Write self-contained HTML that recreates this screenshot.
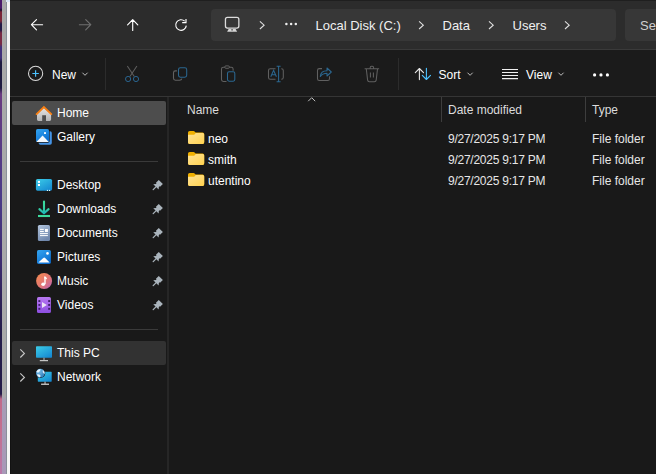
<!DOCTYPE html>
<html><head><meta charset="utf-8">
<style>
*{margin:0;padding:0;box-sizing:border-box}
html,body{width:656px;height:474px;overflow:hidden;background:#191919;font-family:"Liberation Sans",sans-serif;font-size:12px;color:#fff}
.abs{position:absolute}
#wall{left:0;top:0;width:2px;height:474px;background:linear-gradient(to bottom,#4a1a6a 0px,#4a1a6a 8px,#1a1030 10px,#7a2436 12px,#7a2838 21px,#221a46 24px,#221a46 30px,#782a44 33px,#782a44 44px,#40307a 47px,#40307a 58px,#1e1a40 62px,#1e1a40 88px,#6a3a80 94px,#5a3a84 140px,#4a3a88 200px,#3e2c70 260px,#2e2258 300px,#241c4a 330px,#231a48 394px,#c06a8a 399px,#c47090 430px,#b878a8 474px)}
#wallb{left:2px;top:0;width:4px;height:474px;background:linear-gradient(to bottom,#a9a9a9 0,#a9a9a9 396px,#a89cb6 400px,#a898b8 474px)}
#walle{left:6px;top:0;width:1px;height:474px;background:#8a909a}
#wallw{left:7px;top:0;width:3px;height:474px;background:#f6f6f6}
#top{left:10px;top:0;width:646px;height:49px;background:#2c2c2c}
#top0{left:10px;top:0;width:646px;height:1px;background:#1f1f1f}
#topline{left:10px;top:49px;width:646px;height:1px;background:#3a3a3a}
#tb{left:10px;top:50px;width:646px;height:46px;background:#1b1b1b}
#tbline{left:10px;top:96px;width:646px;height:1px;background:#353535}
#addr{left:211px;top:9px;width:405px;height:32px;background:#373737;border-radius:4px}
#search{left:625px;top:9px;width:60px;height:32px;background:#373737;border-radius:4px}
.t{position:absolute;white-space:nowrap;line-height:1}
.a13{font-size:13px;color:#f0f0f0}
#navdiv{left:167px;top:97px;width:2px;height:377px;background:#262626}
#navedge{left:10px;top:97px;width:1px;height:377px;background:#121212}
.sel{position:absolute;left:12px;top:101px;width:154px;height:24px;background:#4d4d4d;border-radius:2px}
.sel2{position:absolute;left:12px;top:341px;width:154px;height:24px;background:#323232;border-radius:2px}
.hr{position:absolute;height:1px;background:#3a3a3a}
.colsep{position:absolute;top:97px;width:1px;height:25px;background:#3d3d3d}
svg{position:absolute;overflow:visible}
.pin{width:12px;height:12px}
.dt{color:#e6e6e6;letter-spacing:-0.25px}
.ty{color:#e6e6e6}
</style></head><body>
<div id="wall" class="abs"></div>
<div id="wallb" class="abs"></div>
<div id="walle" class="abs"></div>
<div id="wallw" class="abs"></div><div class="abs" style="left:6px;top:0;width:4px;height:2px;background:#dce8f6"></div>
<div id="top" class="abs"></div>
<div id="top0" class="abs"></div>
<div id="topline" class="abs"></div>
<div id="tb" class="abs"></div>
<div id="tbline" class="abs"></div>
<div id="addr" class="abs"></div>
<div id="search" class="abs"></div>

<!-- nav buttons -->
<svg style="left:0;top:0" width="1" height="1">
<path d="M31.6 24.7H42.6M36.5 19.6L31.4 24.7L36.5 29.8" fill="none" stroke="#fff" stroke-width="1.15" stroke-linecap="round" stroke-linejoin="round"/>
<path d="M79.4 24.7H90.6M85.7 19.6L90.8 24.7L85.7 29.8" fill="none" stroke="#6f6f6f" stroke-width="1.15" stroke-linecap="round" stroke-linejoin="round"/>
<path d="M132.7 30.5V19.8M127.6 24.9L132.7 19.6L137.8 24.9" fill="none" stroke="#fff" stroke-width="1.15" stroke-linecap="round" stroke-linejoin="round"/>
<path d="M186.3 25.6A5.3 5.3 0 1 1 184.7 21.2M186 18.9V22.6H182.2" fill="none" stroke="#fff" stroke-width="1.15"/>
</svg>

<!-- address -->
<svg style="left:0;top:0" width="1" height="1">
<rect x="225.45" y="17.45" width="13.4" height="10.6" rx="2" fill="none" stroke="#dcdcdc" stroke-width="1.3"/>
<path d="M228.6 29H235.6L237.1 31.8H227.1Z" fill="#d6d6d6"/>
<rect x="231.2" y="29.3" width="1.8" height="1.1" fill="#4a4a4a"/>
<path d="M259.9 21.3L264.1 25.2L259.9 29" fill="none" stroke="#e0e0e0" stroke-width="1.1"/>
<circle cx="286.4" cy="24" r="1.25" fill="#eee"/><circle cx="291.1" cy="24" r="1.25" fill="#eee"/><circle cx="295.8" cy="24" r="1.25" fill="#eee"/>
<path d="M419.1 21.3L423.3 25.2L419.1 29" fill="none" stroke="#e0e0e0" stroke-width="1.1"/>
<path d="M489 21.3L493.2 25.2L489 29" fill="none" stroke="#e0e0e0" stroke-width="1.1"/>
<path d="M565 21.3L569.2 25.2L565 29" fill="none" stroke="#e0e0e0" stroke-width="1.1"/>
</svg>
<div class="t a13" style="left:315.5px;top:19px">Local Disk (C:)</div>
<div class="t a13" style="left:442.5px;top:19px">Data</div>
<div class="t a13" style="left:512.5px;top:19px">Users</div>
<div class="t a13" style="left:640px;top:19px;color:#cfcfcf">Search</div>

<!-- toolbar -->
<svg style="left:0;top:0" width="1" height="1">
<circle cx="35.6" cy="73.4" r="7.1" fill="none" stroke="#d8d8d8" stroke-width="1.05"/>
<path d="M35.6 70.2V76.7M32.35 73.45H38.85" stroke="#4cc2ff" stroke-width="1.15"/>
<path d="M82.4 72.7L85 75.3L87.6 72.7" fill="none" stroke="#bdbdbd" stroke-width="1"/>
<!-- cut -->
<path d="M127.3 66L134.3 76.5M136.9 66L129.9 76.5" stroke="#5e5e5e" stroke-width="1.05"/>
<circle cx="128.1" cy="79" r="2.6" fill="#1b1b1b" stroke="#2a6590" stroke-width="1"/>
<circle cx="136" cy="79" r="2.6" fill="#1b1b1b" stroke="#2a6590" stroke-width="1"/>
<!-- copy -->
<path d="M176.9 70.9H175.4Q173.5 70.9 173.5 72.8V78.3Q173.5 80.2 175.4 80.2H179.6Q181.4 80.2 181.9 78.7" fill="none" stroke="#626262" stroke-width="1.1"/>
<rect x="178.5" y="67.8" width="8.2" height="9.4" rx="1.9" fill="none" stroke="#2b6790" stroke-width="1.05"/>
<!-- paste -->
<path d="M226.5 81.5H223.4Q221.5 81.5 221.5 79.6V69Q221.5 67.2 223.4 67.2H231.3Q233.1 67.2 233.1 69V70.7" fill="none" stroke="#606060" stroke-width="1.05"/>
<rect x="224.8" y="65.9" width="4.6" height="2.4" rx="1.1" fill="#1b1b1b" stroke="#606060" stroke-width="1"/>
<rect x="227.5" y="71.7" width="7.3" height="9.5" rx="1.6" fill="none" stroke="#2b6790" stroke-width="1.05"/>
<!-- rename -->
<path d="M275.5 68.8H270.3Q268.5 68.8 268.5 70.6V77.5Q268.5 79.3 270.3 79.3H275.5M281.3 68.8Q283.3 68.8 283.3 70.6V77.5Q283.3 79.3 281.3 79.3" fill="none" stroke="#606060" stroke-width="1.05"/>
<path d="M270.8 76.7L273.6 70.4L276.4 76.7M271.7 74.7H275.5" fill="none" stroke="#2b6790" stroke-width="1.05"/>
<path d="M278.6 66.3V81.7M276.6 66.3H280.6M276.6 81.7H280.6" fill="none" stroke="#2b6790" stroke-width="1.05"/>
<!-- share -->
<path d="M322 68.6H319.3Q317.5 68.6 317.5 70.4V78.7Q317.5 80.5 319.3 80.5H327.7Q329.5 80.5 329.5 78.7V76.3" fill="none" stroke="#606060" stroke-width="1.05"/>
<path d="M320.3 76.5C320.6 72.6 323.2 70.8 327 70.8V68L331.3 72L327 76V73.2C324 73.2 321.8 74.2 320.3 76.5Z" fill="none" stroke="#2b6790" stroke-width="1.05" stroke-linejoin="round"/>
<!-- trash -->
<path d="M364.6 68.8H379.1M370.2 68.6V67.6Q370.2 66.3 371.5 66.3H372.3Q373.6 66.3 373.6 67.6V68.6M366.3 69L367.6 80.1Q367.8 81.7 369.4 81.7H374.4Q376 81.7 376.2 80.1L377.5 69M370.4 72.6V77.5M373.4 72.6V77.5" fill="none" stroke="#606060" stroke-width="1.05"/>
<!-- separators -->
<rect x="105" y="58" width="1" height="32" fill="#2c2c2c"/>
<rect x="398" y="58" width="1" height="32" fill="#2c2c2c"/>
<!-- sort -->
<path d="M419.4 79.6V68.8M415.3 72.6L419.4 68.5L423.5 72.6" fill="none" stroke="#e8e8e8" stroke-width="1.1" stroke-linecap="round" stroke-linejoin="round"/>
<path d="M426.4 68.3V79.2M422.3 75.4L426.4 79.5L430.5 75.4" fill="none" stroke="#4cc2ff" stroke-width="1.1" stroke-linecap="round" stroke-linejoin="round"/>
<path d="M467.5 72.7L470.1 75.3L472.7 72.7" fill="none" stroke="#bdbdbd" stroke-width="1"/>
<!-- view -->
<path d="M502 69.4H518M502 72.5H518M502 75.5H518M502 78.6H518" stroke="#f0f0f0" stroke-width="1.05"/>
<path d="M558.4 72.7L561 75.3L563.6 72.7" fill="none" stroke="#bdbdbd" stroke-width="1"/>
<circle cx="594.6" cy="74.9" r="1.6" fill="#fff"/><circle cx="601" cy="74.9" r="1.6" fill="#fff"/><circle cx="607.4" cy="74.9" r="1.6" fill="#fff"/>
</svg>
<div class="t" style="left:52px;top:69px">New</div>
<div class="t" style="left:438.5px;top:69px">Sort</div>
<div class="t" style="left:526px;top:69px">View</div>

<!-- nav pane -->
<div id="navedge" class="abs"></div>
<div id="navdiv" class="abs"></div>
<div class="sel"></div>
<div class="sel2"></div>
<svg style="left:0;top:0" width="1" height="1">
<defs>
<linearGradient id="gHome" x1="0" y1="0" x2="0" y2="1"><stop offset="0" stop-color="#e6e6e6"/><stop offset="1" stop-color="#b4b4b4"/></linearGradient>
<linearGradient id="gBlue" x1="0" y1="0" x2="0.6" y2="1"><stop offset="0" stop-color="#34a6f2"/><stop offset="1" stop-color="#0c6ed0"/></linearGradient>
<linearGradient id="gDesk" x1="0" y1="0" x2="0.8" y2="1"><stop offset="0" stop-color="#3ccde8"/><stop offset="1" stop-color="#168ad2"/></linearGradient>
<linearGradient id="gDoc" x1="0" y1="0" x2="0.5" y2="1"><stop offset="0" stop-color="#b4c6de"/><stop offset="1" stop-color="#7088ad"/></linearGradient>
<linearGradient id="gMus" x1="0" y1="0" x2="1" y2="1"><stop offset="0" stop-color="#f68c4c"/><stop offset="0.6" stop-color="#e07478"/><stop offset="1" stop-color="#b864c0"/></linearGradient>
<linearGradient id="gVid" x1="0" y1="0" x2="0" y2="1"><stop offset="0" stop-color="#b878f2"/><stop offset="1" stop-color="#8c4ee0"/></linearGradient>
<linearGradient id="gFold" x1="0" y1="0" x2="1" y2="1"><stop offset="0" stop-color="#ffe396"/><stop offset="1" stop-color="#ffd250"/></linearGradient>
</defs>
<!-- home -->
<path d="M37 114L43.9 107.8L51.1 114V119.5Q51.1 120.9 49.7 120.9H46V115.2H42.2V120.9H38.4Q37 120.9 37 119.5Z" fill="url(#gHome)"/>
<path d="M36.6 114.1L43.9 107L51.3 114.1" fill="none" stroke="#f77f14" stroke-width="1.9" stroke-linecap="round"/>
<!-- gallery -->
<rect x="38.6" y="131.2" width="13.2" height="13.5" rx="1.8" fill="#4594e6"/>
<rect x="35.5" y="128.4" width="14.1" height="14.3" rx="1.8" fill="#191919"/>
<rect x="36" y="128.9" width="13" height="13.1" rx="1.6" fill="url(#gBlue)"/>
<path d="M36.3 141.9L42.6 135.6L48.8 141.9Z" fill="#f4f8fc"/>
<rect x="44" y="132" width="2" height="2" rx="0.4" fill="#fff"/>
<!-- desktop -->
<rect x="35.9" y="178.9" width="16.2" height="11.8" rx="1.6" fill="url(#gDesk)"/>
<rect x="37.9" y="180.9" width="2.1" height="2" fill="#fff"/>
<rect x="37.9" y="184" width="2.1" height="2" fill="#fff"/>
<rect x="46.9" y="189.9" width="1.1" height="1.1" fill="#dff"/><rect x="49" y="189.9" width="1.1" height="1.1" fill="#dff"/>
<!-- downloads -->
<linearGradient id="gDl" gradientUnits="userSpaceOnUse" x1="0" y1="201" x2="0" y2="214"><stop offset="0" stop-color="#3ddd9d"/><stop offset="0.55" stop-color="#33d0a0"/><stop offset="1" stop-color="#1cb2bc"/></linearGradient>
<path d="M44 201.5V212.5M39.4 209.1L44 213.3L48.6 209.1" fill="none" stroke="url(#gDl)" stroke-width="2.1" stroke-linecap="round" stroke-linejoin="round"/>
<path d="M38 216H50" stroke="#3ddc9e" stroke-width="2.1"/>
<!-- documents -->
<rect x="37.9" y="225" width="12.1" height="16" rx="1.5" fill="url(#gDoc)"/>
<path d="M40 229.4H43.8M40 231.5H43.8M40 233.6H47.9M40 235.6H47.9" stroke="#fff" stroke-width="1"/>
<rect x="45" y="229" width="2.9" height="3" fill="#fff"/>
<!-- pictures -->
<rect x="37" y="250" width="13.9" height="13.9" rx="1.6" fill="url(#gBlue)"/>
<path d="M38.4 262.6L43.3 258Q44.2 257.2 45.1 258L49.6 262.6Z" fill="#fff"/>
<circle cx="47.5" cy="253.4" r="1.3" fill="#fff"/>
<!-- music -->
<circle cx="44.1" cy="281" r="8" fill="url(#gMus)"/>
<path d="M45 284V276.8" fill="none" stroke="#fff" stroke-width="1.4"/><path d="M44.4 276.2Q45.4 276.4 46.4 277.4Q47.2 278.4 46.9 279.4Q46 278.6 44.4 278.4Z" fill="#fff"/>
<ellipse cx="43.2" cy="284.2" rx="1.9" ry="1.7" fill="#fff"/>
<!-- videos -->
<rect x="37" y="297" width="13.9" height="16" rx="1.6" fill="url(#gVid)"/>
<rect x="38.4" y="300.1" width="1.9" height="1.9" fill="#40206a"/><rect x="38.4" y="304" width="1.9" height="1.9" fill="#40206a"/><rect x="38.4" y="307.9" width="1.9" height="1.9" fill="#40206a"/>
<rect x="48.2" y="300.1" width="1.9" height="1.9" fill="#40206a"/><rect x="48.2" y="304" width="1.9" height="1.9" fill="#40206a"/><rect x="48.2" y="307.9" width="1.9" height="1.9" fill="#40206a"/>
<path d="M42 302.1L46.9 304.9L42 307.9Z" fill="#ece4f4"/>
<!-- this pc -->
<path d="M20.3 349.3L24.4 353.4L20.3 357.5" fill="none" stroke="#c8c8c8" stroke-width="1.15"/>
<rect x="36" y="346.3" width="16" height="11.4" rx="0.8" fill="url(#gDesk)"/>
<rect x="43.5" y="357.7" width="1" height="2.5" fill="#bbb"/>
<rect x="39.8" y="360" width="8.2" height="1.2" fill="#c4c4c4"/>
<!-- network -->
<path d="M20.3 373.3L24.4 377.4L20.3 381.5" fill="none" stroke="#c8c8c8" stroke-width="1.15"/>
<rect x="37.8" y="371.8" width="13.9" height="9.9" rx="0.6" fill="url(#gDesk)"/>
<rect x="44.5" y="381.6" width="1.1" height="2.4" fill="#c0c0c0"/>
<rect x="41.1" y="383.6" width="7.9" height="1.3" fill="#cdcdcd"/>
<radialGradient id="gGlobe" cx="0.35" cy="0.3" r="0.8"><stop offset="0" stop-color="#78bce8"/><stop offset="1" stop-color="#2a78b8"/></radialGradient>
<circle cx="40.4" cy="373.1" r="4.9" fill="#181818"/>
<circle cx="40.4" cy="373.1" r="4.4" fill="url(#gGlobe)"/>
<path d="M36.4 371.6Q37.5 369 40.6 369Q40.4 371.4 38.4 372.6Q37 372.8 36.4 371.6Z" fill="#e8f4fc"/>
<path d="M36.8 374.4Q38.8 373.8 40.4 375.2Q41 376.6 39.6 377.4Q37.6 376.6 36.8 374.4Z" fill="#e8f4fc"/>
<path d="M42.8 370Q44.8 371 44.8 373.6Q43.6 374 42.9 372.6Q42.4 371.2 42.8 370Z" fill="#dfeffa"/>
</svg>
<div class="t" style="left:57px;top:107px">Home</div>
<div class="t" style="left:57px;top:131px">Gallery</div>
<div class="hr" style="left:20px;top:161px;width:138px"></div>
<div class="t" style="left:57px;top:179px">Desktop</div>
<div class="t" style="left:57px;top:203px">Downloads</div>
<div class="t" style="left:57px;top:227px">Documents</div>
<div class="t" style="left:57px;top:251px">Pictures</div>
<div class="t" style="left:57px;top:275px">Music</div>
<div class="t" style="left:57px;top:299px">Videos</div>
<div class="hr" style="left:20px;top:329px;width:138px"></div>
<div class="t" style="left:57px;top:347px">This PC</div>
<div class="t" style="left:57px;top:371px">Network</div>
<svg style="left:0;top:0" width="1" height="1">
<g transform="translate(152.9 189.9) rotate(-45)"><path d="M4.3 -3.8L6.3 -2.1H7.2V-2.9H11.2V2.9H7.2V2.1H6.3L4.3 3.8Z" fill="#aab4bc"/><path d="M0.4 0H5" stroke="#aab4bc" stroke-width="1.3" stroke-linecap="round"/></g>
<g transform="translate(152.9 213.9) rotate(-45)"><path d="M4.3 -3.8L6.3 -2.1H7.2V-2.9H11.2V2.9H7.2V2.1H6.3L4.3 3.8Z" fill="#aab4bc"/><path d="M0.4 0H5" stroke="#aab4bc" stroke-width="1.3" stroke-linecap="round"/></g>
<g transform="translate(152.9 237.9) rotate(-45)"><path d="M4.3 -3.8L6.3 -2.1H7.2V-2.9H11.2V2.9H7.2V2.1H6.3L4.3 3.8Z" fill="#aab4bc"/><path d="M0.4 0H5" stroke="#aab4bc" stroke-width="1.3" stroke-linecap="round"/></g>
<g transform="translate(152.9 261.9) rotate(-45)"><path d="M4.3 -3.8L6.3 -2.1H7.2V-2.9H11.2V2.9H7.2V2.1H6.3L4.3 3.8Z" fill="#aab4bc"/><path d="M0.4 0H5" stroke="#aab4bc" stroke-width="1.3" stroke-linecap="round"/></g>
<g transform="translate(152.9 285.9) rotate(-45)"><path d="M4.3 -3.8L6.3 -2.1H7.2V-2.9H11.2V2.9H7.2V2.1H6.3L4.3 3.8Z" fill="#aab4bc"/><path d="M0.4 0H5" stroke="#aab4bc" stroke-width="1.3" stroke-linecap="round"/></g>
<g transform="translate(152.9 309.9) rotate(-45)"><path d="M4.3 -3.8L6.3 -2.1H7.2V-2.9H11.2V2.9H7.2V2.1H6.3L4.3 3.8Z" fill="#aab4bc"/><path d="M0.4 0H5" stroke="#aab4bc" stroke-width="1.3" stroke-linecap="round"/></g>
</svg>

<!-- content -->
<div class="t" style="left:187px;top:104px;color:#dcdcdc">Name</div>
<div class="t" style="left:448px;top:104px;color:#dcdcdc">Date modified</div>
<div class="t" style="left:592px;top:104px;color:#dcdcdc">Type</div>
<div class="colsep" style="left:441px"></div>
<div class="colsep" style="left:585px"></div>
<svg style="left:0;top:0" width="1" height="1">
<path d="M308.2 101.2L311.7 97.7L315.2 101.2" fill="none" stroke="#c0c0c0" stroke-width="1"/>
<g transform="translate(0 0)">
<path d="M188 132.5Q188 130.9 189.6 130.9H193.6Q194.6 130.9 195.6 132.4H202.6Q204.2 132.4 204.2 134V142.3Q204.2 143.9 202.6 143.9H189.6Q188 143.9 188 142.3Z" fill="#f0b000"/>
<path d="M188 134.8H194.2L195.8 133H202.6Q204.2 133 204.2 134.6V142.3Q204.2 143.9 202.6 143.9H189.6Q188 143.9 188 142.3Z" fill="url(#gFold)"/>
</g>
<g transform="translate(0 21)">
<path d="M188 132.5Q188 130.9 189.6 130.9H193.6Q194.6 130.9 195.6 132.4H202.6Q204.2 132.4 204.2 134V142.3Q204.2 143.9 202.6 143.9H189.6Q188 143.9 188 142.3Z" fill="#f0b000"/>
<path d="M188 134.8H194.2L195.8 133H202.6Q204.2 133 204.2 134.6V142.3Q204.2 143.9 202.6 143.9H189.6Q188 143.9 188 142.3Z" fill="url(#gFold)"/>
</g>
<g transform="translate(0 42)">
<path d="M188 132.5Q188 130.9 189.6 130.9H193.6Q194.6 130.9 195.6 132.4H202.6Q204.2 132.4 204.2 134V142.3Q204.2 143.9 202.6 143.9H189.6Q188 143.9 188 142.3Z" fill="#f0b000"/>
<path d="M188 134.8H194.2L195.8 133H202.6Q204.2 133 204.2 134.6V142.3Q204.2 143.9 202.6 143.9H189.6Q188 143.9 188 142.3Z" fill="url(#gFold)"/>
</g>

</svg>
<div class="t" style="left:208px;top:133px">neo</div>
<div class="t" style="left:208px;top:154px">smith</div>
<div class="t" style="left:208px;top:175px">utentino</div>
<div class="t dt" style="left:448px;top:133px">9/27/2025 9:17 PM</div>
<div class="t dt" style="left:448px;top:154px">9/27/2025 9:17 PM</div>
<div class="t dt" style="left:448px;top:175px">9/27/2025 9:17 PM</div>
<div class="t ty" style="left:592px;top:133px">File folder</div>
<div class="t ty" style="left:592px;top:154px">File folder</div>
<div class="t ty" style="left:592px;top:175px">File folder</div>
</body></html>
